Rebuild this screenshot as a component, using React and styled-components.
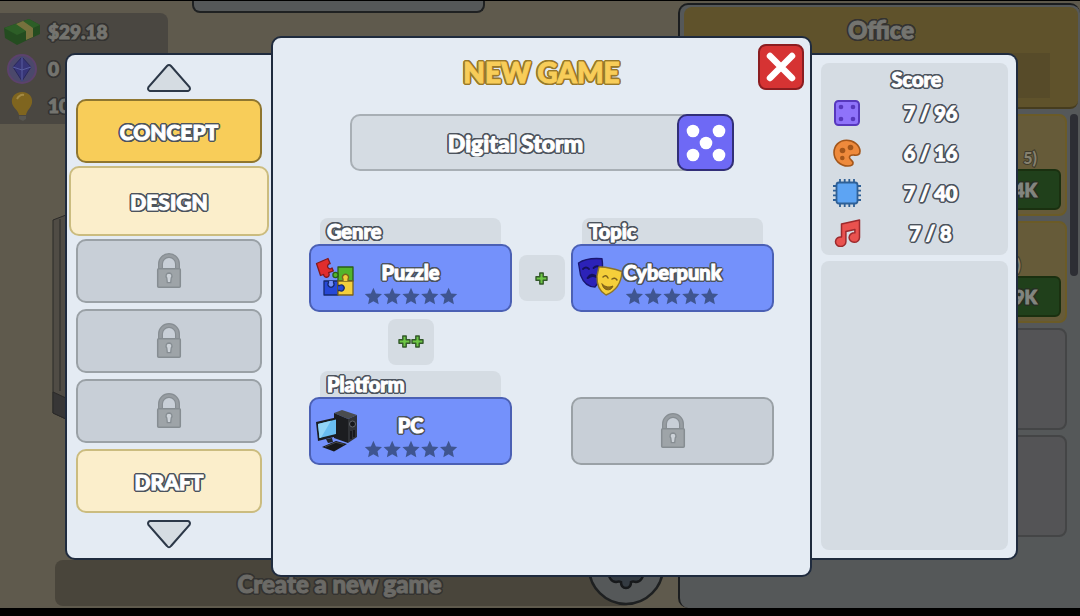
import React from "react";
import styled, { createGlobalStyle, css } from "styled-components";

const ink = "#1f2b3e";
const paper = "#e4ebf3";
const inset = "#d5dce3";

const GlobalStyle = createGlobalStyle`
  *, *::before, *::after { box-sizing: border-box; }
  body { margin: 0; background: #000; }
  body, button, input {
    font-family: Lato, "Open Sans", sans-serif;
    font-weight: 900;
  }
  button { cursor: pointer; padding: 0; }
  svg { display: block; flex: none; }
  h1, h2, p, ul, dl, dd, dt { margin: 0; padding: 0; font-weight: 900; }
`;

/* heavy lettering with a dark rim on every side */
const rim = (fill, edge) => css`
  color: ${fill};
  -webkit-text-stroke: 1px ${fill};
  text-shadow: 2px 0 ${edge}, -2px 0 ${edge}, 0 2px ${edge}, 0 -2px ${edge},
    2px 1px ${edge}, -2px 1px ${edge}, 2px -1px ${edge}, -2px -1px ${edge},
    1px 2px ${edge}, -1px 2px ${edge}, 1px -2px ${edge}, -1px -2px ${edge};
`;
const outlined = rim("#fff", "#4c535d");
const dimmed = rim("#74746f", "#343331");

/* ---------- dimmed game behind the dialog ---------- */

const Screen = styled.main`
  position: relative;
  min-height: 100vh;
  display: flex;
  border-top: 1px solid #000;
  border-bottom: 8px solid #000;
  background: #5f5a4d;
  overflow: hidden;
`;
const Scene = styled.section`
  flex: 1;
  min-width: 0;
  display: flex;
  flex-direction: column;
`;
const SceneTop = styled.div`
  display: flex;
  align-items: flex-start;
  gap: 24px;
`;
const Resources = styled.ul`
  list-style: none;
  width: 168px;
  margin-top: 12px;
  padding: 0 4px;
  border-radius: 0 8px 0 0;
  background: #4a4741;
`;
const Resource = styled.li`
  display: flex;
  align-items: center;
  gap: 8px;
  height: 37px;
  font-size: 19px;
  ${dimmed}
`;
const TopTab = styled.div`
  width: 293px;
  height: 12px;
  border: 2px solid #1f2122;
  border-top: 0;
  border-radius: 0 0 8px 8px;
  background: #555859;
`;
const Cabinet = styled.div`
  flex: 1;
  padding: 91px 0 0 52px;
`;
const TaskRow = styled.div`
  display: flex;
  align-items: flex-end;
  padding: 0 14px 2px 55px;
  height: 82px;
`;
const Task = styled.div`
  flex: 1;
  height: 46px;
  margin-right: -44px;
  padding-right: 8px;
  border-radius: 8px;
  background: #49453b;
  font-size: 24px;
  line-height: 48px;
  text-align: center;
  ${rim("#6b6a66", "#343331")}
`;
const Shop = styled.aside`
  width: 402px;
  margin-top: 2px;
  padding: 2px 0 0 4px;
  border: 2px solid #1b1d1f;
  border-width: 2px 0 0 2px;
  border-radius: 10px 10px 0 10px;
  background: #555859;
`;
const ShopHead = styled.div`
  height: 102px;
  margin-right: 2px;
  padding-top: 8px;
  border-bottom: 2px solid #463c1e;
  border-radius: 8px;
  background: #5f522b;
`;
const ShopTitle = styled.h2`
  font-size: 24px;
  line-height: 30px;
  text-align: center;
  ${dimmed}
`;
const ShopGauge = styled.div`
  height: 45px;
  margin: 8px 28px 0;
  background: #574b29;
`;
const ShopBody = styled.div`
  display: flex;
  gap: 3px;
  padding: 5px 2px 0 0;
`;
const ShopList = styled.div`
  flex: 1;
  display: grid;
  gap: 5px;
`;
const ShopItem = styled.div`
  height: 102px;
  padding: 32px 4px 0;
  border: 2px solid ${(p) => (p.$open ? "#6b5b27" : "#444546")};
  border-radius: 8px;
  background: ${(p) => (p.$open ? "#665b39" : "#545456")};
  text-align: right;
  font-size: 16px;
  line-height: 20px;
`;
const ShopLevel = styled.p`
  padding-right: ${(p) => (p.$short ? 40 : 24)}px;
  color: #85806f;
  -webkit-text-stroke: 2px #3f3b2c;
  paint-order: stroke fill;
`;
const ShopPrice = styled.button`
  display: block;
  width: 160px;
  height: 41px;
  margin: 1px 0 0 auto;
  padding-right: 22px;
  border: 2px solid #1a3010;
  border-radius: 6px;
  background: #20401b;
  text-align: right;
  font-size: 18px;
  ${rim("#83857f", "#263022")}
`;
const ShopThumb = styled.div`
  width: 8px;
  height: 162px;
  border-radius: 4px;
  background: #2d2e34;
`;

/* ---------- dialog ---------- */

const Overlay = styled.div`
  position: absolute;
  inset: 0;
  padding: 35px 62px 0 65px;
`;
const Dialog = styled.div`
  display: grid;
  grid-template-columns: 206fr 541fr 206fr;
`;
const SidePanel = styled.div`
  display: flex;
  flex-direction: column;
  gap: 6px;
  margin: 17px 0;
  border: 2px solid ${ink};
  background: ${paper};
`;
const Steps = styled(SidePanel).attrs({ as: "nav" })`
  align-items: center;
  padding: 8px 9px;
  border-right: 0;
  border-radius: 10px 0 0 10px;
`;
const Scores = styled(SidePanel).attrs({ as: "aside" })`
  padding: 8px 8px 8px 9px;
  border-left: 0;
  border-radius: 0 10px 10px 0;
`;
const Main = styled.section`
  display: flex;
  flex-direction: column;
  padding: 6px 6px 110px;
  border: 2px solid ${ink};
  border-radius: 10px;
  background: ${paper};
`;

const Arrow = styled.button`
  border: 0;
  background: none;
`;
const stepTones = {
  done: ["#f8cd59", "#8f762f"],
  open: ["#fbeecb", "#cbbc7f"],
  locked: ["#c8cfd7", "#9aa1a6"],
};
const Step = styled.button`
  display: grid;
  place-items: center;
  align-self: stretch;
  height: ${(p) => (p.$selected ? 70 : 64)}px;
  margin: ${(p) => (p.$selected ? "-3px -7px" : "0")};
  border: 2px solid ${(p) => stepTones[p.$tone][1]};
  border-radius: 10px;
  background: ${(p) => stepTones[p.$tone][0]};
  font-size: 21px;
  ${outlined}
`;

const Head = styled.header`
  display: grid;
  grid-template-columns: 1fr auto 1fr;
`;
const Title = styled.h1`
  grid-column: 2;
  align-self: end;
  font-size: 28px;
  line-height: 36px;
  ${rim("#f8cd59", "#98792a")}
`;
const Close = styled.button`
  justify-self: end;
  display: grid;
  place-items: center;
  width: 46px;
  height: 46px;
  border: 2px solid #8b1d20;
  border-radius: 8px;
  background: #d63333;
`;
const NameRow = styled.div`
  display: flex;
  height: 57px;
  margin: 24px 70px 0 71px;
  border: 2px solid #a8afb5;
  border-radius: 10px;
  background: ${inset};
`;
const NameInput = styled.input`
  flex: 1;
  min-width: 0;
  border: 0;
  outline: 0;
  background: none;
  text-align: center;
  font-size: 23px;
  ${outlined}
`;
const Dice = styled.button`
  display: grid;
  place-items: center;
  width: 57px;
  height: 57px;
  margin: -2px;
  border: 2px solid #322f78;
  border-radius: 10px;
  background: #6e69f5;
`;
const Board = styled.div`
  display: grid;
  grid-template-columns: 1fr 59px 1fr;
  margin: 47px 30px 0;
`;
const Slot = styled.div`
  display: flex;
  flex-direction: column;
  justify-content: flex-end;
`;
const SlotLabel = styled.label`
  height: 26px;
  margin: 0 11px;
  padding-left: 7px;
  border-radius: 8px 8px 0 0;
  background: ${inset};
  font-size: 20px;
  line-height: 26px;
  ${outlined}
`;
const Card = styled.button`
  display: grid;
  grid-template-areas: "cell";
  align-items: center;
  height: 68px;
  border: 2px solid ${(p) => (p.$locked ? "#9aa1a6" : "#4b60b4")};
  border-radius: 10px;
  background: ${(p) => (p.$locked ? "#c8cfd7" : "#7491fb")};
  & > * { grid-area: cell; justify-self: center; }
  & > svg:first-child:not(:last-child) { justify-self: start; margin-left: 4px; }
`;
const CardText = styled.span`
  display: grid;
  justify-items: center;
  gap: 2px;
  padding-top: 8px;
  font-size: 20px;
  line-height: 26px;
  ${outlined}
`;
const Link = styled.div`
  display: grid;
  place-items: center;
  align-self: end;
  height: ${(p) => (p.$row ? 59 : 68)}px;
`;
const LinkTile = styled.span`
  display: flex;
  align-items: center;
  justify-content: center;
  width: 46px;
  height: 46px;
  border-radius: 8px;
  background: ${inset};
`;

const ScoreBox = styled.div`
  flex: ${(p) => (p.$fill ? 1 : "none")};
  padding: 4px 8px 2px 12px;
  border-radius: 8px;
  background: ${inset};
`;
const ScoreTitle = styled.h2`
  margin-bottom: 2px;
  font-size: 20px;
  line-height: 24px;
  text-align: center;
  ${outlined}
`;
const ScoreRow = styled.div`
  display: grid;
  grid-template-columns: 28px 1fr;
  align-items: center;
  height: 40px;
  font-size: 20px;
  text-align: center;
  ${outlined}
`;

/* ---------- drawings ---------- */

const Lock = () => (
  <svg width="26" height="36" viewBox="0 0 26 36" fill="none">
    <path d="M4.5 16V11a8.5 8.5 0 0 1 17 0v5" stroke="#878e93" strokeWidth="5" />
    <path d="M4.5 16V11a8.5 8.5 0 0 1 17 0v5" stroke="#979da2" strokeWidth="2.6" />
    <rect x="1.7" y="15.7" width="22.6" height="18.6" rx="1" fill="#9ea4a8" stroke="#868d92" strokeWidth="1.5" />
    <path d="M13 20a3 3 0 0 1 2.2 5l-.5 4.6h-3.4l-.5-4.6A3 3 0 0 1 13 20z" fill="#ccd2d8" stroke="#868d92" strokeWidth="1.3" />
  </svg>
);

const Triangle = ({ down }) => (
  <svg width="46" height="30" viewBox="0 0 46 30">
    <path
      d={down ? "M4 2H42Q45 3 43.5 6L25 27Q23 29.5 21 27L2.500 6Q1 3 4 2z" : "M4 28H42Q45 27 43.500 24L25 3Q23 .8 21 3L2.500 24Q1 27 4 28z"}
      fill="#d5dce2"
      stroke="#2c3848"
      strokeWidth="2"
    />
  </svg>
);

const Stars = () => (
  <svg width="94" height="18" viewBox="0 0 94 18" fill="#3f5590">
    {[0, 1, 2, 3, 4].map((i) => (
      <path
        key={i}
        transform={`translate(${i * 18.8} 0)`}
        d="M9.400 .8l2.500 5.600 6.100.7-4.500 4.100 1.200 6-5.300-3-5.300 3 1.200-6L.8 7.100l6.100-.7z"
      />
    ))}
  </svg>
);

const Plus = () => (
  <svg width="13" height="13" viewBox="0 0 13 13">
    <path d="M4.800 1h3.400v3.800H12v3.400H8.200V12H4.800V8.200H1V4.800h3.800z" fill="#6cc644" stroke="#33592a" strokeWidth="1.400" strokeLinejoin="round" />
  </svg>
);

const PuzzleIcon = () => (
  <svg width="42" height="42" viewBox="0 0 42 42" strokeLinejoin="round" strokeWidth="1.300">
    <path d="M9 24h14v14H9z" fill="#2648d8" stroke="#162a6e" />
    <path d="M23 10h15v14H23z" fill="#53b52b" stroke="#2b5c1a" />
    <path d="M23 24h15v14H23z" fill="#f4cf3c" stroke="#7a621c" />
    <circle cx="20.500" cy="18" r="2.600" fill="#53b52b" stroke="#2b5c1a" />
    <path d="M28 24v-2a3 3 0 1 1 5 0v2" fill="#f4cf3c" stroke="#7a621c" />
    <path d="M23 28.500h1.500a3 3 0 1 1 0 5H23" fill="#2648d8" stroke="#162a6e" />
    <path d="M13.500 24v1.500a3 3 0 1 0 5 0V24" fill="#7491fb" stroke="#162a6e" />
    <path d="M1.500 6.500L13 1.500l2.200 5.200a2.600 2.600 0 1 0 1.900 4.300l1.200 3-4.700 1.700a2.800 2.800 0 1 1-5 1.800L5.500 18.500z" fill="#e12d2d" stroke="#821a1d" />
  </svg>
);

const MasksIcon = () => (
  <svg width="46" height="42" viewBox="0 0 46 42" strokeLinejoin="round" strokeLinecap="round">
    <path d="M1.500 6Q10 .5 25 1.800 27.500 20 18 30 8 30 3.500 18z" fill="#2c22b8" stroke="#191670" strokeWidth="1.400" />
    <path d="M6 12q3-3 6 0M16.500 11q3-3 6-1M10.500 21q4-6 9.500-1M11 21q4-3 8-1" fill="none" stroke="#15115c" strokeWidth="1.800" />
    <path d="M22 10Q31 9.500 45 14.500 44 32 29 38 19.500 33 20 19z" fill="#f5cf3a" stroke="#8c7428" strokeWidth="1.400" />
    <path d="M26 20q3-3 5 1M35 22q3-2 5 1" fill="none" stroke="#7c611c" strokeWidth="1.500" />
    <path d="M25 27q5 5 11 2-2 5-7 3.500-3-1-4-5.500z" fill="#8f6e18" stroke="#7c611c" strokeWidth="1" />
  </svg>
);

const PcIcon = () => (
  <svg width="46" height="46" viewBox="0 0 46 46" strokeLinejoin="round">
    <path d="M19 5l8-3 15 5-9 4z" fill="#4a4c4f" />
    <path d="M19 5l14 6v24l-14-5z" fill="#1c1d20" />
    <path d="M33 11l9-4v22l-9 6z" fill="#303236" />
    <circle cx="37.500" cy="16" r="3" fill="#17181a" stroke="#63666b" />
    <path d="M36 23v8M39 22v7" stroke="#101113" strokeWidth="1.500" />
    <path d="M1 14l22-5v19L3 33z" fill="#1a1c20" />
    <path d="M3 16l18-4.500v14.500L4.500 30z" fill="#69bdf0" />
    <path d="M3 16l13-3.200L6 29.700l-1.500.3z" fill="#92d4f6" />
    <path d="M11 31l6-1 1 4-5 1z" fill="#222428" />
    <path d="M7 39l14-6 11 3-13 7.500z" fill="#17181b" />
    <path d="M10 38.800l11-4.500 8 2" stroke="#45484d" fill="none" />
  </svg>
);

const DiceIcon = () => (
  <svg width="28" height="28" viewBox="0 0 28 28">
    <rect x="2" y="2" width="24" height="24" rx="3.500" fill="#8f73fa" stroke="#5738bd" strokeWidth="2" />
    {[[8, 8], [20, 8], [8, 20], [20, 20]].map(([x, y]) => (
      <circle key={`${x}-${y}`} cx={x} cy={y} r="2.300" fill="#5738bd" />
    ))}
  </svg>
);
const PaletteIcon = () => (
  <svg width="28" height="28" viewBox="0 0 28 28" fill="#ee8a3c" stroke="#a3561a" strokeWidth="1.600">
    <path d="M13.500 1.200C6 1.200 1 7 1 13.500 1 21 7 27 15 27c3.500 0 5.300-1.200 5-3.500-.3-1.800-3.800-3.300-3.600-5.300.2-1.900 3-2.400 5-2.100 3.200.5 5.800-.6 5.600-4.100C26.600 6 20.500 1.200 13.500 1.200z" />
    <g fill="#a3561a" stroke="none">
      <circle cx="17.500" cy="8.500" r="2.800" />
      <circle cx="9.500" cy="11.500" r="2.800" />
      <circle cx="9.300" cy="19" r="2.300" />
    </g>
  </svg>
);
const ChipIcon = () => (
  <svg width="28" height="28" viewBox="0 0 28 28">
    <path
      d="M7 0v28M11.700 0v28M16.300 0v28M21 0v28M0 7h28M0 11.700h28M0 16.300h28M0 21h28"
      stroke="#2f6096"
      strokeWidth="1.800"
    />
    <rect x="3.500" y="3.500" width="21" height="21" rx="2.500" fill="#5da4f3" stroke="#2f6096" strokeWidth="1.800" />
  </svg>
);
const MusicIcon = () => (
  <svg width="28" height="28" viewBox="0 0 28 28" fill="#e9524f" stroke="#9d2a2d" strokeWidth="1.500" strokeLinejoin="round">
    <path d="M8.500 5L26.500 1v17.500a5.200 4.800 0 1 1-4.600-4.700V10.500l-9 2v10a5.200 4.800 0 1 1-4.400-4.500z" />
  </svg>
);

const CashIcon = () => (
  <svg width="36" height="28" viewBox="0 0 36 28">
    <path d="M0 10L25 1l11 6v9L13 27 1 20z" fill="#244c20" />
    <path d="M0 10L25 1l11 6-23 10z" fill="#2d5e27" />
    <path d="M12 6l7-3 10 7v9l-7 3v-9z" fill="#77713d" />
  </svg>
);
const GemIcon = () => (
  <svg width="36" height="32" viewBox="0 0 36 32">
    <circle cx="18" cy="16" r="14" fill="#4b486b" stroke="#5c426c" strokeWidth="2" />
    <path d="M18 4l9 10-9 14-9-14z" fill="#373577" stroke="#29285b" />
    <path d="M18 4v24M9 14l9 3 9-3" stroke="#585da0" fill="none" />
  </svg>
);
const BulbIcon = () => (
  <svg width="36" height="30" viewBox="0 0 36 30">
    <path d="M18 1c7 0 11 5 10 11-1 5-5 7-6 12h-7c-1-5-6-7-7-12C7 6 11 1 18 1z" fill="#7f651f" />
    <path d="M13 8q3-5 7-4" stroke="#a38a45" strokeWidth="2" fill="none" />
    <path d="M15 25h7v3l-3 2-4-2z" fill="#575651" />
  </svg>
);

const Gear = () => (
  <svg width="76" height="80" viewBox="0 0 76 80">
    <circle cx="38" cy="41" r="37" fill="#555859" stroke="#1e2021" strokeWidth="2.500" />
    <path d="M20 44q1 12 8 12 3-1 5 0 0 6 5 6t5-6q2-1 5 0 7 0 8-12z" fill="#343b42" stroke="#17191b" strokeWidth="2.500" />
  </svg>
);

const steps = [
  { label: "CONCEPT", tone: "done" },
  { label: "DESIGN", tone: "open", selected: true },
  { tone: "locked" },
  { tone: "locked" },
  { tone: "locked" },
  { label: "DRAFT", tone: "open" },
];
const scores = [
  [DiceIcon, "7 / 96"],
  [PaletteIcon, "6 / 16"],
  [ChipIcon, "7 / 40"],
  [MusicIcon, "7 / 8"],
];

const Choice = ({ label, value, icon: Icon }) => {
  const id = `choice-${label.toLowerCase()}`;
  return (
    <Slot>
      <SlotLabel htmlFor={id}>{label}</SlotLabel>
      <Card id={id} type="button">
        <Icon />
        <CardText>
          {value}
          <Stars />
        </CardText>
      </Card>
    </Slot>
  );
};

export default function App() {
  const [name, setName] = React.useState("Digital Storm");
  return (
    <Screen>
      <GlobalStyle />
      <Scene>
        <SceneTop>
          <Resources>
            <Resource><CashIcon />$29.18</Resource>
            <Resource><GemIcon />0</Resource>
            <Resource><BulbIcon />10</Resource>
          </Resources>
          <TopTab />
        </SceneTop>
        <Cabinet>
          <svg width="14" height="204" viewBox="0 0 14 204">
            <path d="M1 5L14 0v204L1 198z" fill="#504c45" stroke="#2b2a29" />
            <path d="M8 4v172M1 177l13 6v21L1 198z" fill="#373636" stroke="#2b2a29" />
          </svg>
        </Cabinet>
        <TaskRow>
          <Task>Create a new game</Task>
          <Gear />
        </TaskRow>
      </Scene>
      <Shop>
        <ShopHead>
          <ShopTitle>Office</ShopTitle>
          <ShopGauge />
        </ShopHead>
        <ShopBody>
          <ShopList>
            <ShopItem $open>
              <ShopLevel>5)</ShopLevel>
              <ShopPrice type="button">4K</ShopPrice>
            </ShopItem>
            <ShopItem $open>
              <ShopLevel $short>)</ShopLevel>
              <ShopPrice type="button">9K</ShopPrice>
            </ShopItem>
            <ShopItem />
            <ShopItem />
          </ShopList>
          <ShopThumb />
        </ShopBody>
      </Shop>

      <Overlay>
        <Dialog role="dialog" aria-labelledby="dialog-title">
          <Steps>
            <Arrow type="button" aria-label="Previous"><Triangle /></Arrow>
            {steps.map((s, i) => (
              <Step key={i} type="button" $tone={s.tone} $selected={s.selected} aria-label={s.label || "Locked"}>
                {s.label || <Lock />}
              </Step>
            ))}
            <Arrow type="button" aria-label="Next"><Triangle down /></Arrow>
          </Steps>

          <Main>
            <Head>
              <Title id="dialog-title">NEW GAME</Title>
              <Close type="button" aria-label="Close">
                <svg width="30" height="30" viewBox="0 0 30 30">
                  <path d="M4 4l22 22M26 4L4 26" stroke="#fff" strokeWidth="6.500" strokeLinecap="round" />
                </svg>
              </Close>
            </Head>
            <NameRow>
              <NameInput aria-label="Game name" value={name} onChange={(e) => setName(e.target.value)} />
              <Dice type="button" aria-label="Random name">
                <svg width="40" height="40" viewBox="0 0 40 40" fill="#fff">
                  {[[7, 8], [33, 8], [20, 20], [7, 32], [33, 32]].map(([x, y]) => (
                    <circle key={`${x}-${y}`} cx={x} cy={y} r="6.300" />
                  ))}
                </svg>
              </Dice>
            </NameRow>
            <Board>
              <Choice label="Genre" value="Puzzle" icon={PuzzleIcon} />
              <Link><LinkTile><Plus /></LinkTile></Link>
              <Choice label="Topic" value="Cyberpunk" icon={MasksIcon} />
              <Link $row><LinkTile><Plus /><Plus /></LinkTile></Link>
              <span />
              <span />
              <Choice label="Platform" value="PC" icon={PcIcon} />
              <span />
              <Slot>
                <Card type="button" $locked aria-label="Locked"><Lock /></Card>
              </Slot>
            </Board>
          </Main>

          <Scores>
            <ScoreBox>
              <ScoreTitle>Score</ScoreTitle>
              {scores.map(([Icon, value]) => (
                <ScoreRow key={value}><Icon /><span>{value}</span></ScoreRow>
              ))}
            </ScoreBox>
            <ScoreBox $fill />
          </Scores>
        </Dialog>
      </Overlay>
    </Screen>
  );
}
